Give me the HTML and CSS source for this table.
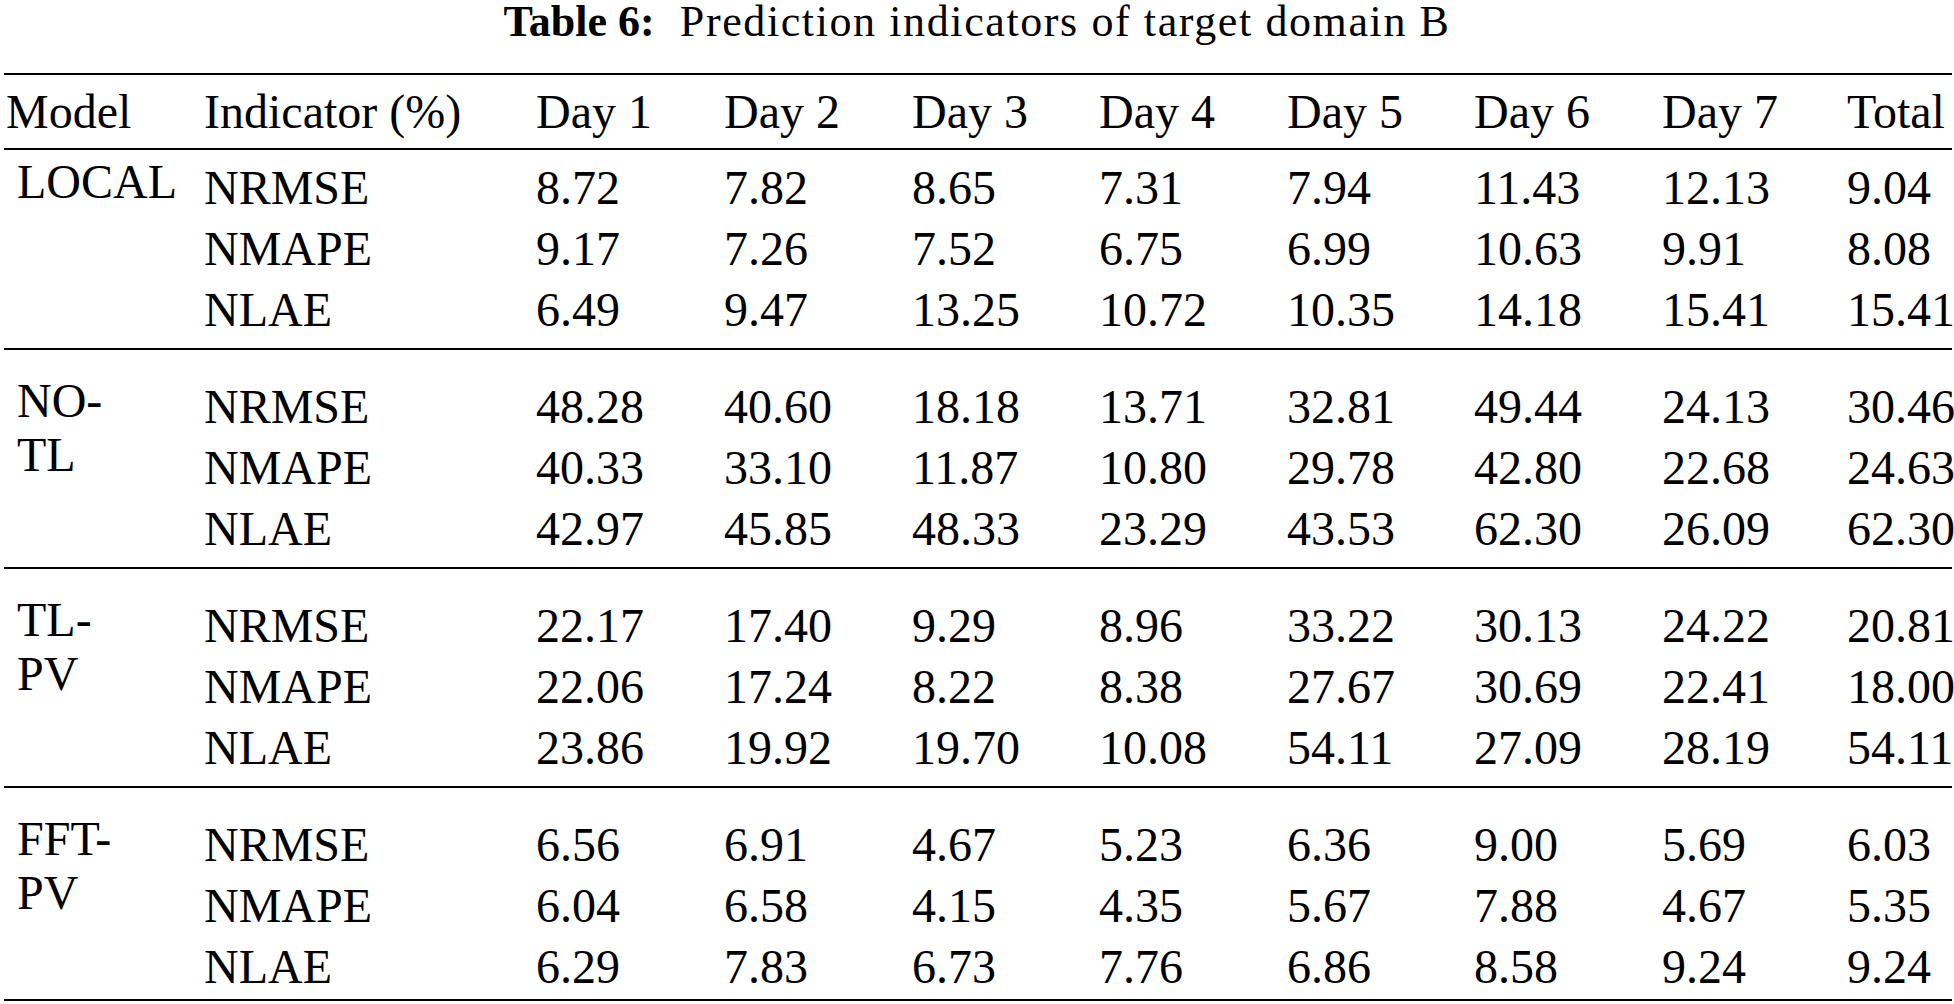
FILE: index.html
```html
<!DOCTYPE html>
<html lang="en">
<head>
<meta charset="utf-8">
<title>Table 6: Prediction indicators of target domain B</title>
<link rel="stylesheet" href="styles.css">
</head>
<body>
<div class="page">
  <div class="caption"><span class="cap-label">Table 6:</span><span class="cap-text">  Prediction indicators of target domain B</span></div>
  <div class="tbl">
    <div class="row-head">
      <div class="c-model">Model</div>
      <div>Indicator (%)</div>
      <div>Day 1</div>
      <div>Day 2</div>
      <div>Day 3</div>
      <div>Day 4</div>
      <div>Day 5</div>
      <div>Day 6</div>
      <div>Day 7</div>
      <div>Total</div>
    </div>

    <div class="grp grp-first">
      <div class="m-cell">LOCAL</div>
      <div>NRMSE</div><div>8.72</div><div>7.82</div><div>8.65</div><div>7.31</div><div>7.94</div><div>11.43</div><div>12.13</div><div>9.04</div>
      <div>NMAPE</div><div>9.17</div><div>7.26</div><div>7.52</div><div>6.75</div><div>6.99</div><div>10.63</div><div>9.91</div><div>8.08</div>
      <div>NLAE</div><div>6.49</div><div>9.47</div><div>13.25</div><div>10.72</div><div>10.35</div><div>14.18</div><div>15.41</div><div>15.41</div>
    </div>

    <div class="grp">
      <div class="m-cell">NO-<br>TL</div>
      <div>NRMSE</div><div>48.28</div><div>40.60</div><div>18.18</div><div>13.71</div><div>32.81</div><div>49.44</div><div>24.13</div><div>30.46</div>
      <div>NMAPE</div><div>40.33</div><div>33.10</div><div>11.87</div><div>10.80</div><div>29.78</div><div>42.80</div><div>22.68</div><div>24.63</div>
      <div>NLAE</div><div>42.97</div><div>45.85</div><div>48.33</div><div>23.29</div><div>43.53</div><div>62.30</div><div>26.09</div><div>62.30</div>
    </div>

    <div class="grp">
      <div class="m-cell">TL-<br>PV</div>
      <div>NRMSE</div><div>22.17</div><div>17.40</div><div>9.29</div><div>8.96</div><div>33.22</div><div>30.13</div><div>24.22</div><div>20.81</div>
      <div>NMAPE</div><div>22.06</div><div>17.24</div><div>8.22</div><div>8.38</div><div>27.67</div><div>30.69</div><div>22.41</div><div>18.00</div>
      <div>NLAE</div><div>23.86</div><div>19.92</div><div>19.70</div><div>10.08</div><div>54.11</div><div>27.09</div><div>28.19</div><div>54.11</div>
    </div>

    <div class="grp grp-last">
      <div class="m-cell">FFT-<br>PV</div>
      <div>NRMSE</div><div>6.56</div><div>6.91</div><div>4.67</div><div>5.23</div><div>6.36</div><div>9.00</div><div>5.69</div><div>6.03</div>
      <div>NMAPE</div><div>6.04</div><div>6.58</div><div>4.15</div><div>4.35</div><div>5.67</div><div>7.88</div><div>4.67</div><div>5.35</div>
      <div>NLAE</div><div>6.29</div><div>7.83</div><div>6.73</div><div>7.76</div><div>6.86</div><div>8.58</div><div>9.24</div><div>9.24</div>
    </div>
  </div>
</div>
</body>
</html>
```

FILE: styles.css
```css
html, body {
  margin: 0;
  padding: 0;
  background: #ffffff;
}

body {
  font-family: "Liberation Serif", Tinos, "Times New Roman", Times, serif;
  color: #000000;
  overflow: hidden;
}

.page {
  width: 1954px;
}

.caption {
  font-size: 44px;
  line-height: 44px;
  text-align: center;
  white-space: pre;
  margin-bottom: 29px;
}

.cap-label {
  font-weight: bold;
}

.cap-text {
  letter-spacing: 1.6px;
}

.tbl {
  margin-left: 4px;
  width: 1948px;
  border-top: 2px solid #000;
  font-size: 48px;
  line-height: 61px;
}

.row-head,
.grp {
  display: grid;
  grid-template-columns: 200px 332px 188px 188px 187px 188px 187px 188px 185px 105px;
  white-space: nowrap;
}

.row-head {
  padding: 6px 0;
  border-bottom: 2px solid #000;
}

.c-model {
  padding-left: 2px;
}

.grp {
  grid-auto-rows: 61px;
  padding: 26px 0 8px;
  border-bottom: 2px solid #000;
}

.grp-first {
  padding-top: 7px;
}

.grp-last {
  padding-bottom: 2px;
}

.m-cell {
  grid-row: span 3;
  line-height: 54px;
  margin-top: -2px;
  padding-left: 13px;
}
```
